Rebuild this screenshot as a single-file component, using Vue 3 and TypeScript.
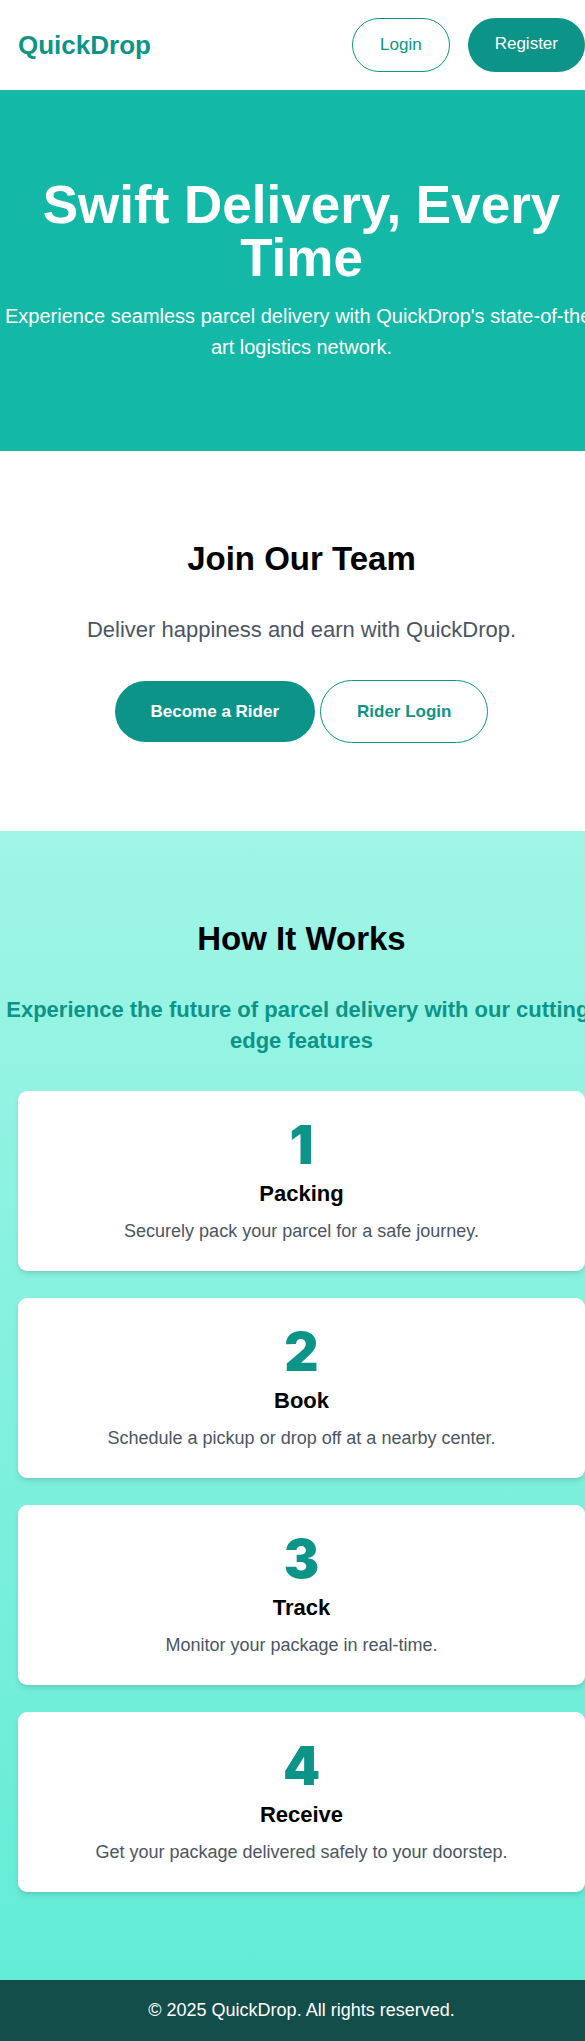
<script setup lang="ts">
interface Step {
  title: string
  text: string
}
const steps: Step[] = [
  { title: 'Packing', text: 'Securely pack your parcel for a safe journey.' },
  { title: 'Book', text: 'Schedule a pickup or drop off at a nearby center.' },
  { title: 'Track', text: 'Monitor your package in real-time.' },
  { title: 'Receive', text: 'Get your package delivered safely to your doorstep.' },
]
</script>

<template>
  <div class="page">
    <header class="bar">
      <a class="brand" href="#">QuickDrop</a>
      <nav class="nav">
        <a class="pill outline" href="#login">Login</a>
        <a class="pill solid" href="#register">Register</a>
      </nav>
    </header>
    <section class="hero">
      <h1>Swift Delivery, Every Time</h1>
      <p>Experience seamless parcel delivery with QuickDrop's state-of-the-art logistics network.</p>
    </section>
    <section class="team">
      <h2>Join Our Team</h2>
      <p>Deliver happiness and earn with QuickDrop.</p>
      <div class="actions">
        <a class="pill big solid" href="#rider">Become a Rider</a>
        <a class="pill big outline" href="#rider-login">Rider Login</a>
      </div>
    </section>
    <section class="how">
      <h2>How It Works</h2>
      <p class="lead">Experience the future of parcel delivery with our cutting-edge features</p>
      <ol class="steps">
        <li v-for="(step, i) in steps" :key="step.title" class="card">
          <div class="number">{{ i + 1 }}</div>
          <h3>{{ step.title }}</h3>
          <p>{{ step.text }}</p>
        </li>
      </ol>
    </section>
    <footer class="foot">© 2025 QuickDrop. All rights reserved.</footer>
  </div>
</template>

<style>
html {
  overflow-x: hidden;
}
</style>

<style scoped>
.page,
.page * {
  box-sizing: border-box;
}
.page {
  width: calc(100% + 18px);
  font-family: "Liberation Sans", Arial, sans-serif;
  font-size: 18px;
  line-height: 27px;
  color: #000;
  background: #fff;
}
h1, h2, h3, p, ol {
  margin: 0;
  padding: 0;
}
a {
  text-decoration: none;
}
.bar {
  display: flex;
  align-items: center;
  justify-content: space-between;
  padding: 18px;
}
.brand {
  font-size: 26px;
  font-weight: 700;
  color: #0d9488;
}
.nav {
  display: flex;
  gap: 18px;
}
.pill {
  padding: 12px 27px;
  border-radius: 999px;
  font-size: 17px;
  line-height: 28px;
}
.solid {
  background: #0d9488;
  color: #fff;
}
.outline {
  border: 1px solid #0d9488;
  color: #0d9488;
}
.hero {
  padding: 88px 0;
  background: #14b8a6;
  color: #fff;
  text-align: center;
}
.hero h1 {
  font-size: 53px;
  line-height: 53px;
  margin-bottom: 17px;
}
.hero p {
  font-size: 20px;
  line-height: 31px;
}
.team {
  padding: 88px 18px;
  text-align: center;
}
h2 {
  font-size: 33px;
  line-height: 40px;
}
.team p {
  margin: 35px 0;
  font-size: 22px;
  line-height: 31px;
  color: #4b5563;
}
.actions {
  display: flex;
  align-items: center;
  justify-content: center;
  gap: 5px;
}
.big {
  padding: 17px 36px;
  font-weight: 700;
  line-height: 27px;
}
.how {
  padding: 88px 18px;
  text-align: center;
  background: linear-gradient(#a0f5e6, #62ecd6);
}
.lead {
  margin: 35px -18px;
  font-size: 22px;
  line-height: 31px;
  font-weight: 700;
  color: #0d9488;
}
.steps {
  display: grid;
  gap: 27px;
  list-style: none;
}
.card {
  padding: 26px;
  border-radius: 9px;
  background: #fff;
  box-shadow: 0 4px 6px -1px rgba(0, 0, 0, 0.1), 0 2px 4px -2px rgba(0, 0, 0, 0.1);
}
.number {
  margin-bottom: 4px;
  font-family: Inter, "Liberation Sans", sans-serif;
  font-size: 53px;
  line-height: 57px;
  font-weight: 900;
  color: #0d9488;
}
.card h3 {
  margin-bottom: 9px;
  font-size: 22px;
  line-height: 31px;
}
.card p {
  color: #4b5563;
}
.foot {
  padding: 17px;
  background: #134e4a;
  color: #fff;
  text-align: center;
}
</style>
